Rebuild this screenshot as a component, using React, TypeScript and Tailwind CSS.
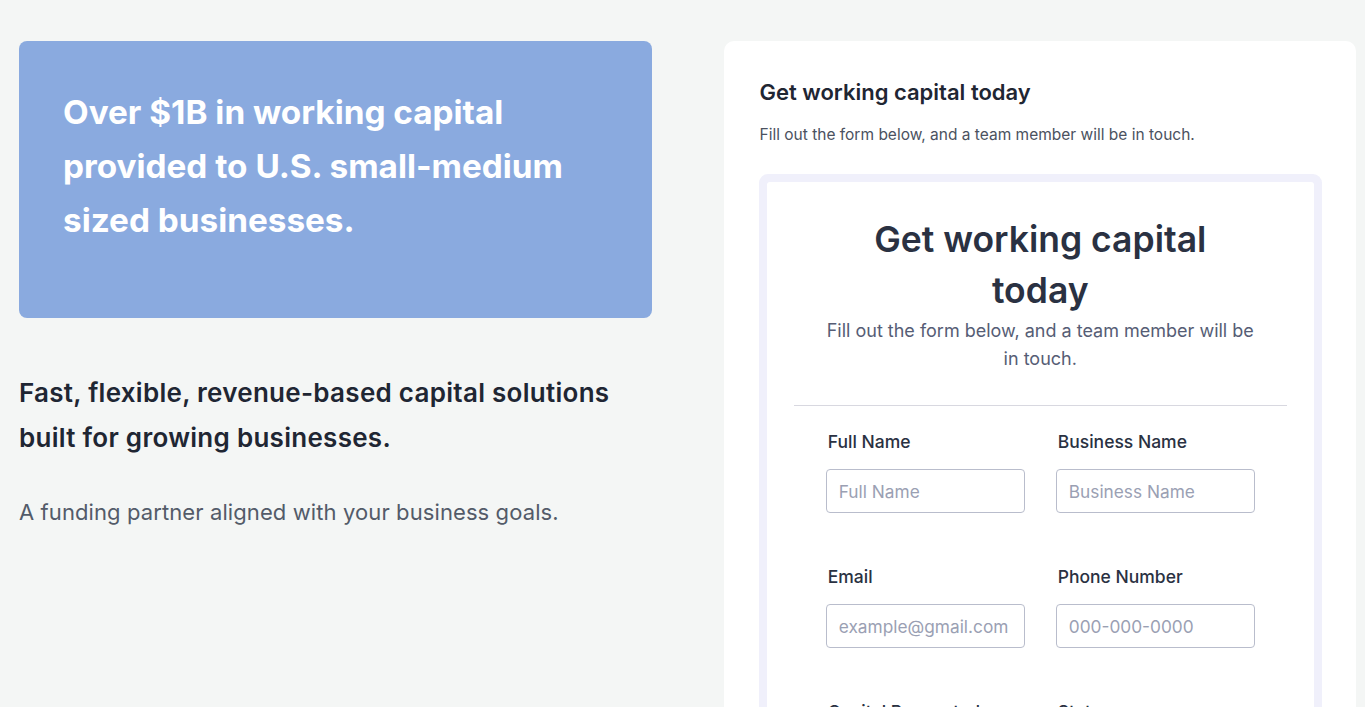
const FIELDS = [
  { label: "Full Name", placeholder: "Full Name" },
  { label: "Business Name", placeholder: "Business Name" },
  { label: "Email", placeholder: "example@gmail.com" },
  { label: "Phone Number", placeholder: "000-000-0000" },
  { label: "Capital Requested", placeholder: "$50,000" },
  { label: "State", placeholder: "State" },
];

export default function App() {
  return (
    <div
      className="min-h-screen bg-[#f4f6f5] pl-[19px] pr-[9px] pt-[41px]"
      style={{ fontFamily: "Inter, 'Noto Sans', sans-serif" }}
    >
      <div className="grid grid-cols-2 gap-[72px]">
        <section>
          <div className="h-[277px] rounded-[8px] bg-[#8aaadf] px-11 pt-[44px]">
            <h1 className="text-[33.3px] font-bold leading-[54px] text-white">
              Over $1B in working capital provided to U.S. small-medium sized businesses.
            </h1>
          </div>
          <h2 className="mt-[52px] text-[26px] font-semibold leading-[45px] tracking-[0.28px] text-[#1f2633]">
            Fast, flexible, revenue-based capital solutions built for growing businesses.
          </h2>
          <p className="mt-[37px] text-[22px] leading-[30px] tracking-[0.1px] text-[#535b69]">
            A funding partner aligned with your business goals.
          </p>
        </section>

        <section className="h-[700px] rounded-[10px] bg-white pl-[35px] pr-[34px] pt-[37px]">
          <h3 className="pl-px text-[22px] font-semibold leading-[28px] text-[#1f2633]">
            Get working capital today
          </h3>
          <p className="mt-[19px] pl-px text-[15.5px] leading-[20px] text-[#4b5260]">
            Fill out the form below, and a team member will be in touch.
          </p>

          <div className="mt-[29px] rounded-[9px] bg-[#f0f0fb] px-2 pt-2">
            <div className="h-[560px] rounded-[3px] bg-white px-[27px] pt-[32px]">
              <div className="mx-auto w-[436px] text-center">
                <h4 className="text-[35.5px] font-semibold leading-[51px] text-[#2a3142]">
                  Get working capital today
                </h4>
                <p className="pt-px text-[18px] leading-[28px] text-[#565d75]">
                  Fill out the form below, and a team member will be in touch.
                </p>
              </div>
              <div className="mt-[32px] border-t border-[#d8d8e0]" />
              <div className="mx-auto mt-[24px] grid w-[429px] grid-cols-2 gap-x-[31px] gap-y-[52px]">
                {FIELDS.map((f) => (
                  <label key={f.label} className="block">
                    <span className="block pl-[2px] text-[17.5px] font-medium leading-[24px] text-[#2a3142]">
                      {f.label}
                    </span>
                    <input
                      placeholder={f.placeholder}
                      className="mt-[15px] h-[44px] w-full rounded-[4px] border border-[#b9bdcc] bg-white px-3 text-[17.3px] text-[#2a3142] placeholder:text-[#9aa0b3] outline-none"
                    />
                  </label>
                ))}
              </div>
            </div>
          </div>
        </section>
      </div>
    </div>
  );
}
